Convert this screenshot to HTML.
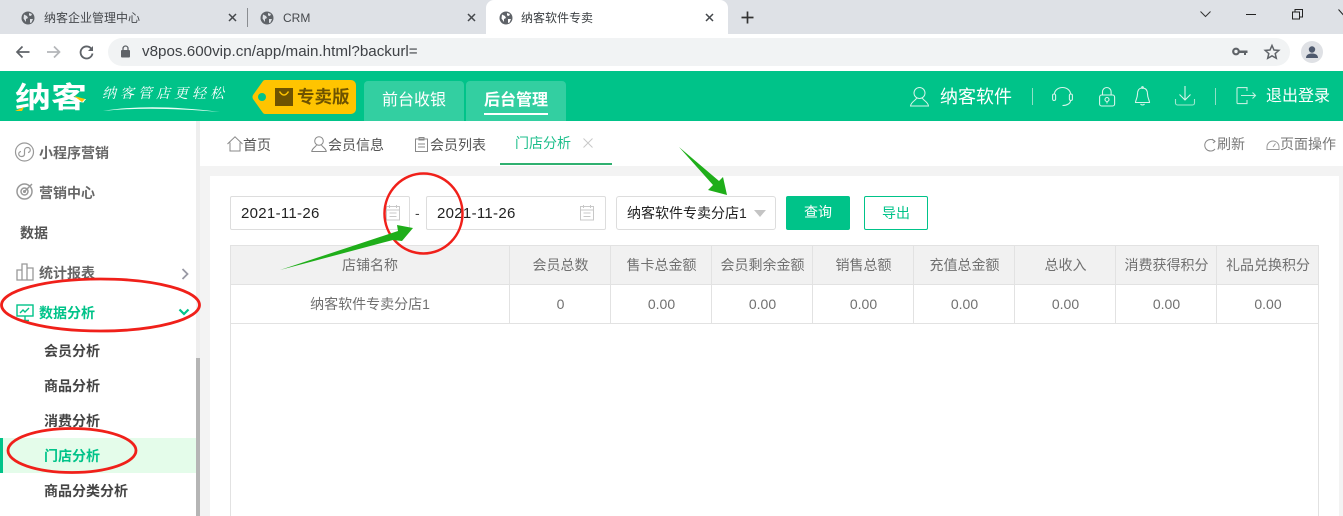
<!DOCTYPE html>
<html lang="zh">
<head>
<meta charset="utf-8">
<title>纳客软件专卖</title>
<style>
*{box-sizing:border-box;margin:0;padding:0}
html,body{width:1343px;height:516px;overflow:hidden;background:#fff;font-family:"Liberation Sans","Noto Sans CJK SC",sans-serif}
.a{position:absolute;white-space:nowrap}
svg{position:absolute;overflow:visible}
.cell{position:absolute;text-align:center;color:#707070;font-size:14px;white-space:nowrap;line-height:18px}
.nav{position:absolute;font-size:14px;font-weight:700;white-space:nowrap;color:#666;line-height:20px}
.sub{position:absolute;left:44px;font-size:14px;font-weight:700;color:#444;line-height:20px;white-space:nowrap}
.tabt{position:absolute;font-size:14px;color:#555;line-height:20px;white-space:nowrap}
.inp{position:absolute;top:196px;height:34px;background:#fff;border:1px solid #ddd;border-radius:2px;font-size:15px;letter-spacing:.3px;color:#222;line-height:33px;padding-left:10px;white-space:nowrap}
.vl{position:absolute;width:1px;background:#e2e2e2}
</style>
</head>
<body>
<div class="a" style="left:0;top:0;width:1343px;height:34px;background:#dee1e6"></div>
<div class="a" style="left:486px;top:0;width:242px;height:34px;background:#fff;border-radius:8px 8px 0 0"></div>
<div class="a" style="left:247px;top:8px;width:1px;height:19px;background:#8a8d91"></div>

<svg style="left:21px;top:11px" width="14" height="14" viewBox="0 0 14 14"><circle cx="7" cy="7" r="6.5" fill="#5f6368"/><path d="M3 3.500l3 1.500 1 2-2 1v3L2.500 7.500zM8 2l3 1-1 2-2-.5zM9 8h3l-1.500 3.500L9 12z" fill="#dee1e6"/></svg>
<svg style="left:260px;top:11px" width="14" height="14" viewBox="0 0 14 14"><circle cx="7" cy="7" r="6.500" fill="#5f6368"/><path d="M3 3.500l3 1.500 1 2-2 1v3L2.500 7.500zM8 2l3 1-1 2-2-.5zM9 8h3l-1.500 3.500L9 12z" fill="#dee1e6"/></svg>
<svg style="left:499px;top:11px" width="14" height="14" viewBox="0 0 14 14"><circle cx="7" cy="7" r="6.500" fill="#5f6368"/><path d="M3 3.500l3 1.500 1 2-2 1v3L2.500 7.500zM8 2l3 1-1 2-2-.5zM9 8h3l-1.500 3.500L9 12z" fill="#fff"/></svg>

<div class="a" style="left:44px;top:10px;font-size:12px;line-height:16px;color:#45484c">纳客企业管理中心</div>
<div class="a" style="left:283px;top:10px;font-size:12px;line-height:16px;color:#45484c">CRM</div>
<div class="a" style="left:521px;top:10px;font-size:12px;line-height:16px;color:#3c4043">纳客软件专卖</div>

<svg style="left:228px;top:13px" width="9" height="9"><path d="M1 1l7 7M8 1l-7 7" stroke="#45484c" stroke-width="1.500"/></svg>
<svg style="left:467px;top:13px" width="9" height="9"><path d="M1 1l7 7M8 1l-7 7" stroke="#45484c" stroke-width="1.500"/></svg>
<svg style="left:705px;top:13px" width="9" height="9"><path d="M1 1l7 7M8 1l-7 7" stroke="#45484c" stroke-width="1.500"/></svg>
<svg style="left:741px;top:11px" width="13" height="13"><path d="M6.500 0.500v12M0.500 6.500h12" stroke="#333" stroke-width="1.700"/></svg>

<svg style="left:1200px;top:11px" width="11" height="7"><path d="M.5.500l5 5 5-5" fill="none" stroke="#333" stroke-width="1"/></svg>
<div class="a" style="left:1246px;top:14px;width:10px;height:1px;background:#222"></div>
<svg style="left:1292px;top:9px" width="11" height="11"><path d="M.5 3h7v7h-7zM3 3V.5h7.500V8H8" fill="none" stroke="#222" stroke-width="1"/></svg>
<svg style="left:1338px;top:9px" width="8" height="10"><path d="M.5.500l8 9" fill="none" stroke="#222" stroke-width="1"/></svg>

<div class="a" style="left:0;top:34px;width:1343px;height:37px;background:#fff"></div>
<svg style="left:15px;top:45px" width="15" height="14"><path d="M14.500 7H2M7.500 1.500L2 7l5.500 5.500" fill="none" stroke="#5f6368" stroke-width="1.700"/></svg>
<svg style="left:47px;top:45px" width="15" height="14"><path d="M0 7h12.500M7 1.500L12.500 7 7 12.500" fill="none" stroke="#b4b6b9" stroke-width="1.700"/></svg>
<svg style="left:79px;top:45px" width="15" height="15"><path d="M12.500 4A6 6 0 1 0 13.500 8.500" fill="none" stroke="#5f6368" stroke-width="1.800"/><path d="M14 1v5H9z" fill="#5f6368"/></svg>
<div class="a" style="left:108px;top:38px;width:1182px;height:28px;background:#f1f3f4;border-radius:14px"></div>
<svg style="left:120px;top:45px" width="11" height="13"><path d="M3 5.500V3.500a2.500 2.500 0 0 1 5 0v2" fill="none" stroke="#5f6368" stroke-width="1.300"/><rect x="1" y="5" width="9" height="7.500" rx="1" fill="#5f6368"/></svg>
<div class="a" style="left:142px;top:43px;font-size:15.200px;line-height:18px;color:#3f4246">v8pos.600vip.cn/app/main.html?backurl=</div>
<svg style="left:1232px;top:47px" width="16" height="10"><circle cx="4" cy="4.500" r="2.800" fill="none" stroke="#5f6368" stroke-width="2.200"/><path d="M7 3.500h8.500v2.500h-1.500v2h-2V6H7z" fill="#5f6368"/></svg>
<svg style="left:1264px;top:44px" width="16" height="15"><path d="M8 1.500l2 4.500 4.800.4-3.600 3.200 1.100 4.700L8 11.900l-4.300 2.400 1.100-4.700L1.200 6.400 6 6z" fill="none" stroke="#5f6368" stroke-width="1.500"/></svg>
<div class="a" style="left:1301px;top:41px;width:22px;height:22px;border-radius:50%;background:#dfe1e5"></div>
<svg style="left:1301px;top:41px" width="22" height="22"><circle cx="11" cy="8.500" r="3.200" fill="#4f5a6e"/><path d="M5 17c0-3.500 3-4.500 6-4.500s6 1 6 4.500z" fill="#4f5a6e"/></svg>

<div class="a" style="left:0;top:71px;width:1343px;height:50px;background:#00c389"></div>
<div class="a" style="left:15px;top:77.500px;font-size:36px;font-weight:700;color:#fff;line-height:40px;transform:scaleY(.8)">纳客</div>
<svg style="left:15px;top:96px" width="72" height="16"><path d="M0 15l9-4-2 4zM59 0l11 3-3 3z" fill="#ffc400"/></svg>
<div class="a" style="left:102px;top:82px;font-family:'Noto Serif CJK SC',serif;font-size:14px;font-weight:400;color:#fff;line-height:22px;letter-spacing:4px;font-style:italic">纳客管店更轻松</div>
<svg style="left:100px;top:103px" width="122" height="10"><path d="M3 8Q50 0 120 9Q50 3 3 8z" fill="#e8fff6"/></svg>

<svg style="left:235px;top:80px" width="122" height="34"><path d="M30 0H116a5 5 0 0 1 5 5V29a5 5 0 0 1-5 5H30a3 3 0 0 1-2-1L18 19q-1-2 0-4L28 1a3 3 0 0 1 2-1z" fill="#ffc400"/><circle cx="27" cy="17" r="4" fill="#00c389"/></svg>
<svg style="left:275px;top:88px" width="18" height="18"><rect width="18" height="18" fill="#6e5300"/><path d="M4.500 3.500q4.500 7 9 0" fill="none" stroke="#ffc400" stroke-width="1.500"/></svg>
<div class="a" style="left:297px;top:86px;font-size:17.500px;font-weight:700;color:#6e5300;line-height:22px">专卖版</div>

<div class="a" style="left:364px;top:81px;width:100px;height:40px;background:#33cfa1;border-radius:4px 4px 0 0"></div>
<div class="a" style="left:466px;top:81px;width:100px;height:40px;background:#33cfa1;border-radius:4px 4px 0 0"></div>
<div class="a" style="left:382px;top:90px;font-size:16px;color:#fff;line-height:22px">前台收银</div>
<div class="a" style="left:484px;top:90px;font-size:16px;font-weight:700;color:#fff;line-height:22px">后台管理</div>
<div class="a" style="left:484px;top:113px;width:64px;height:2px;background:#fff"></div>

<svg style="left:910px;top:87px" width="20" height="20" fill="none" stroke="#d6f5ea" stroke-width="1"><circle cx="9.500" cy="6" r="5.500"/><path d="M6.500 11c0 2-5.500 3.500-6 8h18c-.5-4.500-6-6-6-8"/></svg>
<div class="a" style="left:940px;top:85px;font-size:18px;color:#fff;line-height:24px">纳客软件</div>
<div class="a" style="left:1032px;top:88px;width:1px;height:17px;background:#8fe0c6"></div>
<svg style="left:1052px;top:87px" width="21" height="19" fill="none" stroke="#d6f5ea" stroke-width="1.100"><path d="M2.500 7a8 6.500 0 0 1 16 0"/><rect x=".6" y="7" width="3" height="6.500" rx="1.500"/><rect x="17.400" y="7" width="3" height="6.500" rx="1.500"/><path d="M18.500 13.500c0 3-3.500 5-8 5"/></svg>
<svg style="left:1099px;top:87px" width="16" height="19" fill="none" stroke="#d6f5ea" stroke-width="1.100"><rect x=".6" y="8" width="15" height="11" rx="2"/><path d="M3.500 8V4.800a4.300 4.300 0 0 1 8.600 0V8"/><circle cx="8" cy="12.500" r="2"/><path d="M8 14.500v2"/></svg>
<svg style="left:1135px;top:86px" width="15" height="20" fill="none" stroke="#d6f5ea" stroke-width="1.100"><path d="M7.500 2C3.500 2 2.500 5 2.500 8c0 4-2 6-2 8.500h14c0-2.500-2-4.500-2-8.500 0-3-1-6-5-6z"/><circle cx="7.500" cy="1.500" r=".8"/><path d="M5.500 18c1 1.300 3 1.300 4 0"/></svg>
<svg style="left:1175px;top:86px" width="20" height="20" fill="none" stroke="#d6f5ea" stroke-width="1.100"><path d="M10 0v14M4.500 8.500L10 14l5.500-5.500"/><path d="M.5 13v4a2 2 0 0 0 2 2h15a2 2 0 0 0 2-2v-4" stroke="#9fe8cf"/></svg>
<div class="a" style="left:1215px;top:88px;width:1px;height:17px;background:#8fe0c6"></div>
<svg style="left:1236px;top:87px" width="20" height="18" fill="none" stroke="#bff0df" stroke-width="1.100"><path d="M11 4V.6H2a1 1 0 0 0-1 1v14a1 1 0 0 0 1 1h9V13"/><path d="M5 8.500h14.500M16.500 5.500l3 3-3 3"/></svg>
<div class="a" style="left:1266px;top:86px;font-size:16px;color:#fff;line-height:22px">退出登录</div>

<div class="a" style="left:0;top:121px;width:196px;height:395px;background:#fff"></div>
<div class="a" style="left:196px;top:121px;width:4px;height:395px;background:#eee"></div>
<div class="a" style="left:196px;top:358px;width:4px;height:158px;background:#b5b5b5"></div>

<svg style="left:15px;top:142px" width="20" height="20" fill="none" stroke="#999" stroke-width="1.200"><circle cx="9.500" cy="10" r="9"/><path d="M9.500 12.500a3 3 0 0 1-3 2 2.500 2.500 0 0 1-.5-5M9.500 8a3 3 0 0 1 3-2.500 2.500 2.500 0 0 1 .5 5M9.500 8v4.500"/></svg>
<div class="nav" style="left:39px;top:143px">小程序营销</div>
<svg style="left:16px;top:182px" width="18" height="18" fill="none" stroke="#999" stroke-width="1.500"><circle cx="8.500" cy="9.500" r="7.500"/><circle cx="8.500" cy="9.500" r="3.500"/><circle cx="8.500" cy="9.500" r=".8"/><path d="M8.500 9.500L16 2"/></svg>
<div class="nav" style="left:39px;top:183px">营销中心</div>
<div class="nav" style="left:20px;top:223px;color:#555">数据</div>
<svg style="left:16px;top:263px" width="18" height="18" fill="none" stroke="#999" stroke-width="1.300"><path d="M1 7h5v10H1zM6 1h5v16H6zM11 5h6v12h-6z"/></svg>
<div class="nav" style="left:39px;top:263px">统计报表</div>
<svg style="left:181px;top:268px" width="9" height="12"><path d="M1.500 1l5 5-5 5" fill="none" stroke="#9a9aa5" stroke-width="1.800"/></svg>

<svg style="left:16px;top:304px" width="18" height="18" fill="none" stroke="#00c389" stroke-width="1.400"><rect x="1" y="1" width="16" height="11"/><path d="M4 9l3-3 2 2 4-4M9 12v4M5 16.500h8"/></svg>
<div class="nav" style="left:39px;top:303px;color:#00c389">数据分析</div>
<svg style="left:178px;top:308px" width="12" height="9"><path d="M1.500 1.500L6 6l4.500-4.500" fill="none" stroke="#00c389" stroke-width="2.200"/></svg>

<div class="sub" style="top:341px">会员分析</div>
<div class="sub" style="top:376px">商品分析</div>
<div class="sub" style="top:411px">消费分析</div>
<div class="a" style="left:0;top:438px;width:196px;height:35px;background:#e4fcea"></div>
<div class="a" style="left:0;top:438px;width:3px;height:35px;background:#00c389"></div>
<div class="sub" style="top:446px;color:#00c389">门店分析</div>
<div class="sub" style="top:481px">商品分类分析</div>

<div class="a" style="left:200px;top:121px;width:1143px;height:395px;background:#f3f3f3"></div>
<div class="a" style="left:200px;top:121px;width:1143px;height:45px;background:#fff"></div>
<div class="a" style="left:500px;top:163px;width:112px;height:2px;background:#2fb070"></div>

<svg style="left:227px;top:136px" width="16" height="16" fill="none" stroke="#888" stroke-width="1"><path d="M.5 8L8 .8 15.500 8M3 6.500v8.500h10V6.500"/></svg>
<div class="tabt" style="left:243px;top:135px">首页</div>
<svg style="left:311px;top:136px" width="16" height="17" fill="none" stroke="#888" stroke-width="1"><circle cx="8" cy="5" r="4.300"/><path d="M5.500 9C5 11 1 12 .8 15.500h14.400C15 12 11 11 10.500 9"/></svg>
<div class="tabt" style="left:328px;top:135px">会员信息</div>
<svg style="left:415px;top:137px" width="13" height="15" fill="none" stroke="#888" stroke-width="1"><path d="M.5 2h12v12.500H.5zM4 .5h5V3H4zM3 7h7M3 10h7"/></svg>
<div class="tabt" style="left:430px;top:135px">会员列表</div>
<div class="tabt" style="left:515px;top:133px;color:#1fbf8c">门店分析</div>
<svg style="left:583px;top:138px" width="10" height="10"><path d="M.5.500l9 9M9.500.500l-9 9" stroke="#c9c9c9" stroke-width="1"/></svg>

<svg style="left:1204px;top:138px" width="12" height="14" fill="none" stroke="#888" stroke-width="1"><path d="M11 3.500A5.800 5.800 0 1 0 11 11"/><path d="M8 1l3 2.500L9 5"/></svg>
<div class="tabt" style="left:1217px;top:134px;color:#777">刷新</div>
<svg style="left:1266px;top:138px" width="14" height="13" fill="none" stroke="#999" stroke-width="1"><path d="M1 9a6 6 0 1 1 12 0v2.500H1zM7 9l2.500-3.500"/></svg>
<div class="tabt" style="left:1280px;top:134px;color:#777">页面操作</div>

<div class="a" style="left:210px;top:176px;width:1129px;height:340px;background:#fff"></div>

<div class="inp" style="left:230px;width:180px">2021-11-26</div>
<div class="a" style="left:415px;top:204px;font-size:14px;color:#444;line-height:18px">-</div>
<div class="inp" style="left:426px;width:180px">2021-11-26</div>
<svg style="left:386px;top:204px" width="15" height="17" fill="none" stroke="#c8c8c8" stroke-width="1"><path d="M.5 2.500h13v13.500H.5zM.5 6h13M3.500 1v3M10.500 1v3M3.500 9h7M3.500 12.500h7"/></svg>
<svg style="left:580px;top:204px" width="15" height="17" fill="none" stroke="#c8c8c8" stroke-width="1"><path d="M.5 2.500h13v13.500H.5zM.5 6h13M3.500 1v3M10.500 1v3M3.500 9h7M3.500 12.500h7"/></svg>

<div class="inp" style="left:616px;width:160px;font-size:14px;letter-spacing:0;border-radius:3px;color:#222">纳客软件专卖分店1</div>
<svg style="left:754px;top:210px" width="12" height="7"><path d="M0 0h12L6 7z" fill="#c4c4c4"/></svg>
<div class="a" style="left:786px;top:196px;width:64px;height:34px;background:#00c389;border-radius:2px;color:#fff;font-size:14px;line-height:33px;text-align:center">查询</div>
<div class="a" style="left:864px;top:196px;width:64px;height:34px;background:#fff;border:1px solid #00c389;border-radius:2px;color:#00c389;font-size:14px;line-height:33px;text-align:center">导出</div>

<div class="a" style="left:230px;top:245px;width:1088px;height:40px;background:#f1f1f1"></div>
<div class="a" style="left:230px;top:245px;width:1088px;height:1px;background:#e2e2e2"></div>
<div class="a" style="left:230px;top:284px;width:1088px;height:1px;background:#e2e2e2"></div>
<div class="a" style="left:230px;top:323px;width:1088px;height:1px;background:#e2e2e2"></div>
<div class="vl" style="left:230px;top:245px;height:271px"></div>
<div class="vl" style="left:1318px;top:245px;height:271px"></div>
<div class="vl" style="left:509px;top:245px;height:79px"></div>
<div class="vl" style="left:610px;top:245px;height:79px"></div>
<div class="vl" style="left:711px;top:245px;height:79px"></div>
<div class="vl" style="left:812px;top:245px;height:79px"></div>
<div class="vl" style="left:913px;top:245px;height:79px"></div>
<div class="vl" style="left:1014px;top:245px;height:79px"></div>
<div class="vl" style="left:1115px;top:245px;height:79px"></div>
<div class="vl" style="left:1216px;top:245px;height:79px"></div>

<div class="cell" style="left:230px;width:280px;top:256px">店铺名称</div>
<div class="cell" style="left:510px;width:101px;top:256px">会员总数</div>
<div class="cell" style="left:611px;width:101px;top:256px">售卡总金额</div>
<div class="cell" style="left:712px;width:101px;top:256px">会员剩余金额</div>
<div class="cell" style="left:813px;width:101px;top:256px">销售总额</div>
<div class="cell" style="left:914px;width:101px;top:256px">充值总金额</div>
<div class="cell" style="left:1015px;width:101px;top:256px">总收入</div>
<div class="cell" style="left:1116px;width:101px;top:256px">消费获得积分</div>
<div class="cell" style="left:1217px;width:102px;top:256px">礼品兑换积分</div>

<div class="cell" style="left:230px;width:280px;top:295px">纳客软件专卖分店1</div>
<div class="cell" style="left:510px;width:101px;top:295px">0</div>
<div class="cell" style="left:611px;width:101px;top:295px">0.00</div>
<div class="cell" style="left:712px;width:101px;top:295px">0.00</div>
<div class="cell" style="left:813px;width:101px;top:295px">0.00</div>
<div class="cell" style="left:914px;width:101px;top:295px">0.00</div>
<div class="cell" style="left:1015px;width:101px;top:295px">0.00</div>
<div class="cell" style="left:1116px;width:101px;top:295px">0.00</div>
<div class="cell" style="left:1217px;width:102px;top:295px">0.00</div>

<svg style="left:0;top:0" width="1343" height="516" fill="none">
<ellipse cx="100.500" cy="305" rx="99" ry="26" stroke="#f0201a" stroke-width="2.800"/>
<ellipse cx="72" cy="450.500" rx="64" ry="22" stroke="#f0201a" stroke-width="2.800"/>
<ellipse cx="423.500" cy="213.500" rx="39" ry="40" stroke="#f0201a" stroke-width="2.500"/>
<path d="M280 270L398 231 397 225 413 228 402 241 393 240z" fill="#1fae1a"/>
<path d="M679 147L719 181 723 177 727 195 708 190 713 185z" fill="#1fae1a"/>
</svg>
</body>
</html>
